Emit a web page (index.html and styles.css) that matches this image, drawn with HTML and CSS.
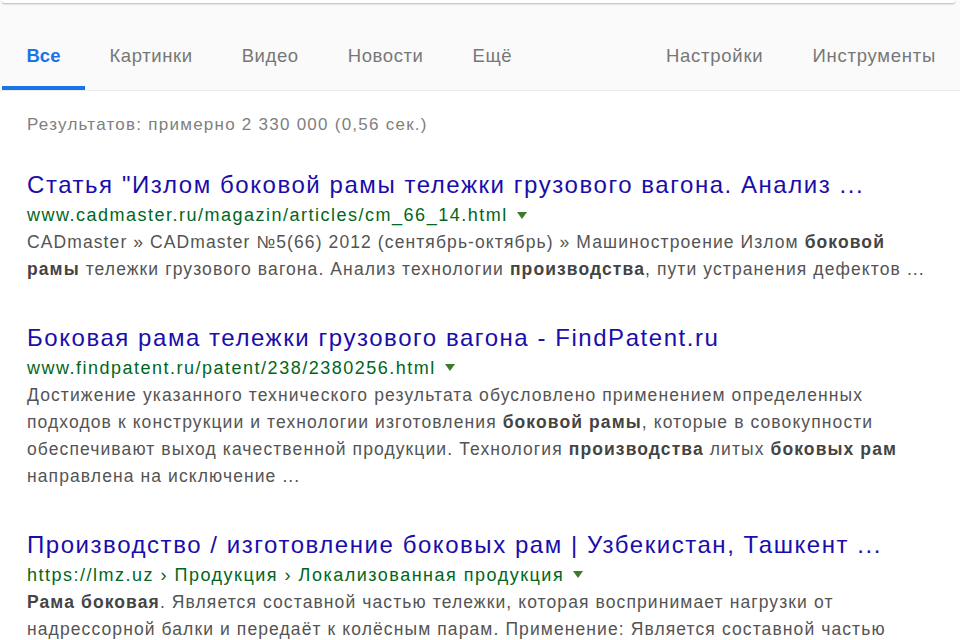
FILE: index.html
```html
<!DOCTYPE html>
<html lang="ru">
<head>
<meta charset="utf-8">
<link rel="stylesheet" href="styles.css">
</head>
<body>
<div class="header">
  <div class="searchbox"></div>
  <nav class="tabs">
    <div class="tabs-left">
      <a class="tab active">Все</a>
      <a class="tab">Картинки</a>
      <a class="tab">Видео</a>
      <a class="tab">Новости</a>
      <a class="tab">Ещё</a>
    </div>
    <div class="tabs-right">
      <a class="tab">Настройки</a>
      <a class="tab">Инструменты</a>
    </div>
  </nav>
</div>
<main class="results">
  <div class="stats">Результатов: примерно 2 330 000 (0,56 сек.)</div>

  <div class="result">
    <a class="title">Статья "Излом боковой рамы тележки грузового вагона. Анализ ...</a>
    <div class="url">www.cadmaster.ru/magazin/articles/cm_66_14.html<span class="caret"></span></div>
    <div class="snippet">CADmaster » CADmaster №5(66) 2012 (сентябрь-октябрь) » Машиностроение Излом <b>боковой</b><br><b>рамы</b> тележки грузового вагона. Анализ технологии <b>производства</b>, пути устранения дефектов ...</div>
  </div>

  <div class="result">
    <a class="title">Боковая рама тележки грузового вагона - FindPatent.ru</a>
    <div class="url">www.findpatent.ru/patent/238/2380256.html<span class="caret"></span></div>
    <div class="snippet">Достижение указанного технического результата обусловлено применением определенных<br>подходов к конструкции и технологии изготовления <b>боковой рамы</b>, которые в совокупности<br>обеспечивают выход качественной продукции. Технология <b>производства</b> литых <b>боковых рам</b><br>направлена на исключение ...</div>
  </div>

  <div class="result">
    <a class="title">Производство / изготовление боковых рам | Узбекистан, Ташкент ...</a>
    <div class="url">https://lmz.uz › Продукция › Локализованная продукция<span class="caret"></span></div>
    <div class="snippet"><b>Рама боковая</b>. Является составной частью тележки, которая воспринимает нагрузки от<br>надрессорной балки и передаёт к колёсным парам. Применение: Является составной частью</div>
  </div>
</main>
</body>
</html>
```

FILE: styles.css
```css
* { box-sizing: border-box; }
html, body { margin: 0; padding: 0; background: #fff; }
body {
  font-family: "Liberation Sans", Arial, sans-serif;
  width: 960px;
  height: 640px;
  overflow: hidden;
}
.header {
  background: #fafafa;
  height: 91px;
  border-bottom: 1px solid #ebebeb;
}
.searchbox {
  height: 3px;
  margin: 0 5px 0 2px;
  background: #fff;
  border-radius: 0 0 2px 2px;
  box-shadow: 0 1px 2px rgba(0,0,0,0.28);
}
.tabs {
  display: flex;
  justify-content: space-between;
  margin-top: 40px;
  padding: 0 0 0 2px;
}
.tabs-left, .tabs-right { display: flex; }
.tab {
  display: block;
  padding: 0 24.5px;
  height: 47px;
  line-height: 26px;
  font-size: 18.5px;
  color: #777;
  border-bottom: 4px solid transparent;
  letter-spacing: 0.6px;
}
.tabs-right .tab { letter-spacing: 0.75px; }
.tabs-right .tab:last-child { padding-right: 24px; }
.tab.active {
  color: #1a73e8;
  font-weight: bold;
  letter-spacing: 0;
  border-bottom-color: #1a73e8;
}
.results { padding: 0 0 0 27px; }
.stats {
  font-size: 17px;
  letter-spacing: 1.25px;
  color: #808080;
  margin-top: 22px;
  line-height: 24px;
}
.result { margin-top: 33px; }
.result + .result { margin-top: 39px; }
.title {
  display: block;
  font-size: 24px;
  letter-spacing: 1.55px;
  line-height: 30px;
  color: #1a0dab;
}
.url {
  margin-top: 1px;
  font-size: 18px;
  letter-spacing: 1.5px;
  line-height: 28px;
  color: #006621;
  display: flex;
  align-items: center;
}
.caret {
  display: inline-block;
  width: 0; height: 0;
  margin-left: 9px;
  border-left: 5.5px solid transparent;
  border-right: 5.5px solid transparent;
  border-top: 7px solid #3c7a2c;
}
.snippet {
  font-size: 17.5px;
  letter-spacing: 1.1px;
  line-height: 27.3px;
  color: #545454;
  white-space: nowrap;
}
.snippet b { color: #444; font-weight: bold; }
```
